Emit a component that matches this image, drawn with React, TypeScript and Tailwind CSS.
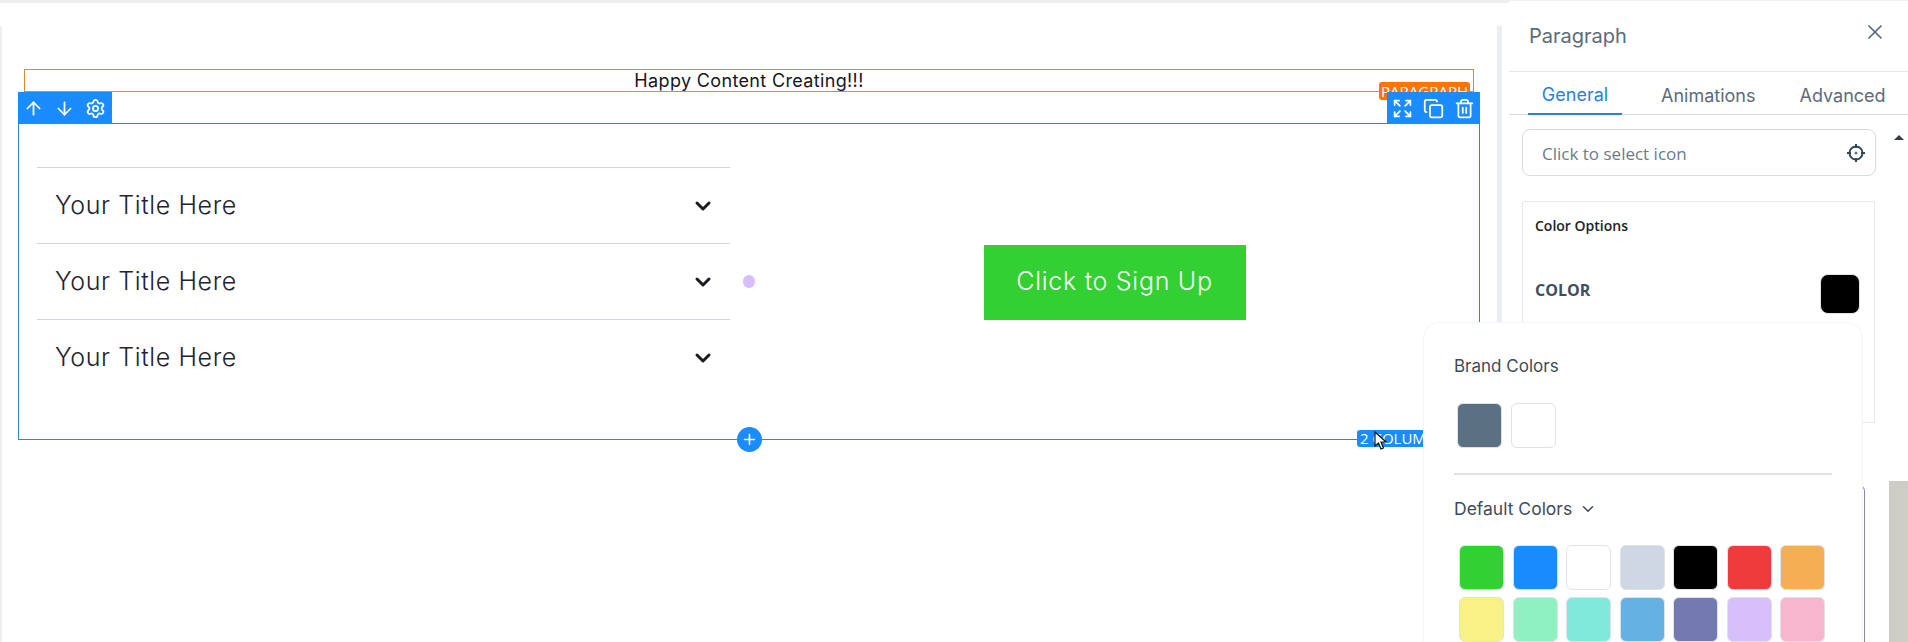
import { ArrowDown, ArrowUp, ChevronDown, Copy, Expand, Plus, Settings, Trash2, X } from 'lucide-react';

const defaultColors = [
  '#32d032', '#1a8cff', '#ffffff', '#cfd6e4', '#000000', '#ef3b3b', '#f6ae54',
  '#f8f186', '#90f1c0', '#80e9dc', '#66b1e3', '#737ab2', '#d6bffb', '#f7b5ce',
];

function Swatch({ color }: { color: string }) {
  return (
    <div
      className="h-[45px] w-[45px] rounded-md border border-[#dfe3e8]"
      style={{ backgroundColor: color }}
    />
  );
}

function AccordionRow() {
  return (
    <div className="flex h-[76px] items-center justify-between border-t border-[#d0d5dc] pl-[18px] pr-[15px]">
      <span className="font-['Inter'] text-[25px] font-light tracking-[0.6px] text-[#25222e]">Your Title Here</span>
      <ChevronDown className="h-[24px] w-[24px] text-[#1b1b22]" strokeWidth={3} />
    </div>
  );
}

function Canvas() {
  return (
    <div className="w-[1509px] shrink-0">
      <div className="h-[3px] bg-[#eeeeee]" />
      <div className="mt-[23px] h-[616px] w-[1502px] border-l-2 border-r-[5px] border-l-[#eeeeee] border-r-[#eaeef3] pt-[43px]">
        {/* Selected paragraph */}
        <div className="relative ml-[22px] flex h-[23px] w-[1450px] items-center justify-center border border-[#d98a32]">
          <span className="font-['Inter'] text-[18px] leading-none tracking-[0.35px] text-[#16161c]">Happy Content Creating!!!</span>
          <div className="absolute right-[3px] top-[12px] flex h-[18px] w-[91px] items-center justify-center rounded-[3px] bg-[#f97506] font-['Open_Sans'] text-[15px] leading-none text-white">
            PARAGRAPH
          </div>
        </div>

        {/* Row */}
        <div className="relative ml-[16px] h-[348px] w-[1462px] border-x border-b border-[#2d86d9]">
          <div className="relative -mx-px flex h-[32px] items-start justify-between border-b border-[#2d86d9]">
            <div className="flex h-[31px] w-[94px] items-center justify-between bg-[#1a8cff] pl-[5px] pr-[6px] pt-[2px] text-white">
              <ArrowUp className="h-[21px] w-[21px]" strokeWidth={2} />
              <ArrowDown className="h-[21px] w-[21px]" strokeWidth={2} />
              <Settings className="h-[21px] w-[21px]" strokeWidth={2} />
            </div>
            <div className="flex h-[31px] w-[93px] items-center justify-between bg-[#1a8cff] pl-[5px] pr-[5px] pt-[2px] text-white">
              <Expand className="h-[21px] w-[21px]" strokeWidth={2} />
              <Copy className="h-[21px] w-[21px]" strokeWidth={2} />
              <Trash2 className="h-[21px] w-[21px]" strokeWidth={2} />
            </div>
          </div>

          <div className="flex h-[314px] items-center">
            <div className="ml-[18px] w-[693px] shrink-0">
              <AccordionRow />
              <AccordionRow />
              <AccordionRow />
            </div>
            <div className="ml-[20px] flex flex-1 justify-center pt-[2px]">
              <div className="flex h-[75px] w-[262px] items-center justify-center bg-[#32d032] font-['Inter'] text-[25px] font-light tracking-[0.7px] text-white">
                Click to Sign Up
              </div>
            </div>
          </div>

          <div className="absolute left-[724px] top-[183px] h-[13px] w-[12px] rounded-full bg-[#d8bffb]" />
          <div className="absolute left-[718px] top-[335px] flex h-[25px] w-[25px] items-center justify-center rounded-full bg-[#1a8cff] text-white">
            <Plus className="h-[17px] w-[17px]" strokeWidth={2.2} />
          </div>
          <div className="absolute left-[1338px] top-[338px] flex h-[17px] items-center whitespace-nowrap rounded-[3px] bg-[#1a8cff] px-[3px] font-['Open_Sans'] text-[15px] leading-none text-white">
            2 COLUMNS
          </div>
          <svg className="absolute left-[1355px] top-[339px]" width="13" height="19" viewBox="0 0 13 19">
            <path d="M1 1v14l3.500-3 2.500 6 2.500-1-2.500-6H12z" fill="#fff" stroke="#111" strokeWidth="1.2" />
          </svg>
        </div>
      </div>
    </div>
  );
}

function SettingsPanel() {
  return (
    <div className="flex w-[399px] shrink-0 flex-col border-t border-[#f2f2f2]">
      <div className="flex h-[71px] items-start justify-between border-b border-[#e3e7ec] pl-[20px] pr-[21px] pt-[22px]">
        <span className="font-['Inter'] text-[20px] leading-[26px] text-[#5c6b7a]">Paragraph</span>
        <X className="mt-[-3px] h-[24px] w-[24px] text-[#5c6b7a]" strokeWidth={1.7} />
      </div>
      <div className="flex h-[43px] border-b border-[#d5dbe3] font-['Inter'] text-[18px] text-[#5c6b7a]">
        <div className="ml-[19px] flex h-[43px] w-[94px] items-center justify-center border-b-2 border-[#2d80d8] pt-[4px] text-[#2d80d8]">General</div>
        <div className="ml-[39px] flex h-[42px] items-center pt-[4px]">Animations</div>
        <div className="ml-[44px] flex h-[42px] items-center pt-[4px]">Advanced</div>
      </div>

      <div className="flex min-h-0 flex-1">
        <div className="w-[380px] pl-[13px]">
          <div className="mt-[14px] flex h-[47px] w-[354px] items-center justify-between rounded-lg border border-[#d5dbe3] pl-[19px] pr-[9px]">
            <span className="pt-[2px] font-['Open_Sans'] text-[17px] text-[#6d7b89]">Click to select icon</span>
            <svg width="20" height="20" viewBox="0 0 20 20" fill="none" stroke="#33475b" strokeWidth="2">
              <circle cx="10" cy="10" r="6.500" />
              <path d="M10 1v4M10 15v4M1 10h4M15 10h4" />
              <path d="M8.500 10h3M10 8.500v3" strokeWidth="1" />
            </svg>
          </div>
          <div className="mt-[25px] h-[222px] w-[353px] rounded-t-[2px] border border-[#e6e9ee] pl-[12px] pt-[15px]">
            <div className="font-['Open_Sans'] text-[14px] font-semibold leading-[18px] text-[#1b222b]">Color Options</div>
            <div className="mt-[39px] flex items-start justify-between pr-[14px]">
              <span className="mt-[4px] font-['Open_Sans'] text-[16px] font-bold leading-[24px] text-[#3f4e60]">COLOR</span>
              <div className="h-[40px] w-[40px] rounded-lg border border-[#dfe3e8] bg-black" />
            </div>
          </div>
          <div className="mt-[62px] h-[158px] w-[343px] rounded-tr-md border-r border-t border-[#8a8ab0]" />
        </div>
        <div className="flex w-[19px] flex-col items-center">
          <div className="mt-[20px] h-0 w-0 border-x-[5px] border-b-[5px] border-x-transparent border-b-[#333c44]" />
          <div className="mt-auto h-[161px] w-full bg-[#cdcdc5]" />
        </div>
      </div>
    </div>
  );
}

function ColorPopover() {
  return (
    <div className="absolute left-[1423px] top-[322px] h-[340px] w-[440px] rounded-t-2xl border border-[#f3f5f8] bg-white pl-[30px] pt-[32px]">
      <div className="font-['Inter'] text-[17px] leading-[22px] text-[#3f4a5a]">Brand Colors</div>
      <div className="ml-[3px] mt-[26px] flex gap-[9px]">
        <Swatch color="#5a7184" />
        <Swatch color="#ffffff" />
      </div>
      <div className="mt-[25px] h-[2px] w-[378px] bg-[#dfe3e8]" />
      <div className="mt-[23px] flex items-center gap-[7px] font-['Inter'] text-[17.500px] leading-[22px] text-[#3f4a5a]">
        Default Colors
        <ChevronDown className="h-[18px] w-[18px]" strokeWidth={2} />
      </div>
      <div className="ml-[5px] mt-[25px] grid w-[366px] grid-cols-7 gap-x-[8.500px] gap-y-[7px]">
        {defaultColors.map((color, i) => (
          <Swatch key={i} color={color} />
        ))}
      </div>
    </div>
  );
}

export default function App() {
  return (
    <div className="relative flex h-[642px] w-[1908px] overflow-hidden bg-white">
      <Canvas />
      <SettingsPanel />
      <ColorPopover />
    </div>
  );
}
